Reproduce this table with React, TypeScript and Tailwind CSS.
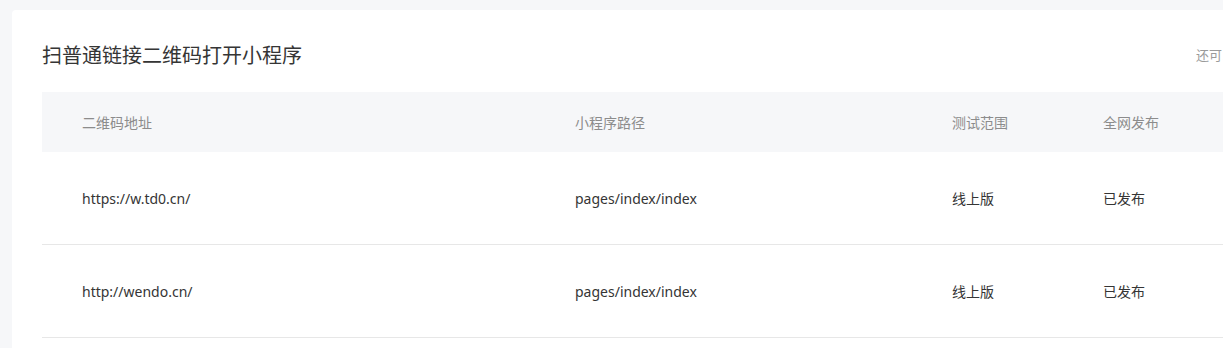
const rows = [
  { url: "https://w.td0.cn/", path: "pages/index/index", scope: "线上版", status: "已发布" },
  { url: "http://wendo.cn/", path: "pages/index/index", scope: "线上版", status: "已发布" },
];

export default function App() {
  return (
    <div
      className="h-[348px] w-full overflow-hidden bg-[#f6f7f9] pl-[12px] pt-[10px]"
      style={{ fontFamily: '"Noto Sans", "Noto Sans CJK SC", sans-serif' }}
    >
      <div className="h-[400px] w-[1400px] rounded-tl-[4px] bg-white pl-[30px]">
        <div className="flex h-[82px] items-center pt-[10px]">
          <h2 className="w-[1154px] text-[20px] leading-[28px] text-[#353535]">扫普通链接二维码打开小程序</h2>
          <span className="whitespace-nowrap text-[13px] text-[#9a9a9a]">还可以配置 3 条规则</span>
        </div>
        <div className="w-[1230px] text-[14px]">
          <div className="flex h-[60px] items-center bg-[#f6f7f9] text-[#8c8c8c]">
            <div className="w-[493px] pl-[40px]">二维码地址</div>
            <div className="w-[377px] pl-[40px]">小程序路径</div>
            <div className="w-[151px] pl-[40px]">测试范围</div>
            <div className="flex-1 pl-[40px]">全网发布</div>
          </div>
          {rows.map((r) => (
            <div key={r.url} className="flex h-[93px] items-center border-b border-[#e7e7e7] text-[#353535]">
              <div className="w-[493px] pl-[40px]">{r.url}</div>
              <div className="w-[377px] pl-[40px]">{r.path}</div>
              <div className="w-[151px] pl-[40px]">{r.scope}</div>
              <div className="flex-1 pl-[40px]">{r.status}</div>
            </div>
          ))}
        </div>
      </div>
    </div>
  );
}
